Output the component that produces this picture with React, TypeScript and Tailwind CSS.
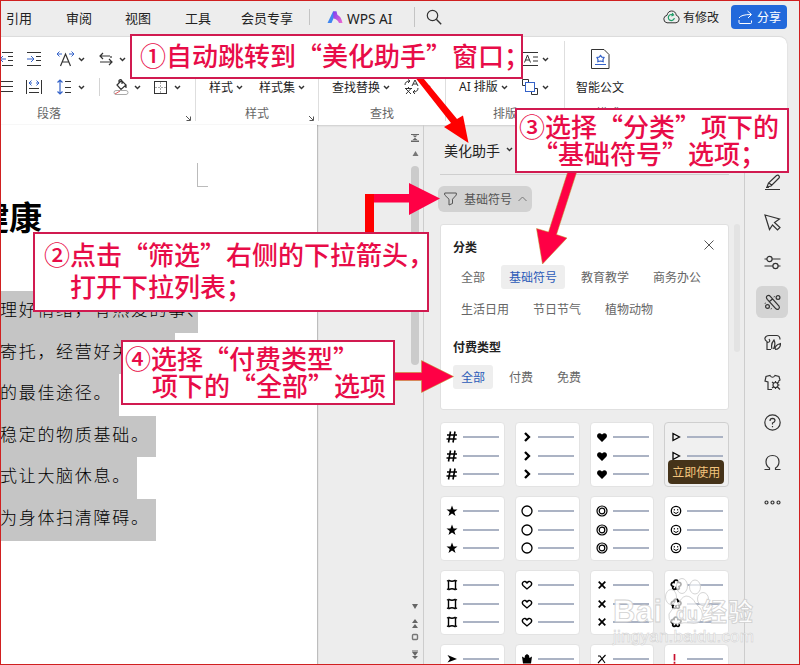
import React from 'react';

type IconProps = {
  className?: string;
  children: React.ReactNode;
  w: number;
  h: number;
  color?: string;
  stroke?: number;
};

const Icon: React.FC<IconProps> = ({ className = '', children, w, h, color = '#333', stroke = 1 }) => (
  <svg
    width={w}
    height={h}
    viewBox={`0 0 ${w} ${h}`}
    fill="none"
    stroke={color}
    strokeWidth={stroke}
    className={`shrink-0 ${className}`}
  >
    {children}
  </svg>
);

const Chevron: React.FC<{ className?: string }> = ({ className = '' }) => (
  <Icon w={7} h={5} className={className}>
    <path d="M1 1L3.5 3.6L6 1" strokeWidth="1.4" />
  </Icon>
);

const Launcher: React.FC<{ className?: string }> = ({ className = '' }) => (
  <Icon w={7} h={7} className={className} color="#555">
    <path d="M1 1L5 5M5.5 1.5V5.5H1.5" />
  </Icon>
);

const Header: React.FC = () => (
  <header className="flex h-[36px] shrink-0 items-center pb-[2px] text-[13px] leading-none text-[#222]">
    <span className="ml-[6px] w-[60px]">引用</span>
    <span className="w-[59px]">审阅</span>
    <span className="w-[60px]">视图</span>
    <span className="w-[56px]">工具</span>
    <span className="w-[68px]">会员专享</span>
    <span className="h-4 w-px bg-[#c4c4c4]" />
    <svg width="16" height="13" viewBox="0 0 16 13" className="ml-[17px] shrink-0">
      <defs>
        <linearGradient id="wps" x1="0" x2="1" y1="0" y2="1">
          <stop offset="0" stopColor="#7b3cf0" />
          <stop offset="1" stopColor="#f06bd0" />
        </linearGradient>
      </defs>
      <path d="M6 .5H9.500L4.500 12H.5Z" fill="#3f86f0" />
      <path d="M6 .5H9.500L10.500 4Q14 5 15.500 12H12Q10.500 8 6.500 7.500Z" fill="url(#wps)" />
    </svg>
    <span className="ml-1 w-[67px] pt-[3px] font-['Noto_Sans'] text-[13.7px]">WPS AI</span>
    <span className="h-5 w-px bg-[#c4c4c4]" />
    <Icon w={16} h={16} className="ml-[11px]">
      <circle cx="6.500" cy="6.500" r="5.200" strokeWidth="1.200" />
      <path d="M10.300 10.300L15.200 15.200" strokeWidth="1.400" />
    </Icon>
    <div className="mr-[13px] ml-auto flex items-center">
      <Icon w={17} h={14} className="mr-[3px]">
        <path d="M4 12.800Q.7 12.300 .8 8.800Q1 6 4 5.300Q5 1 8.700 1Q12.500 1 13.300 5.300Q16 6 16.200 9Q16.100 12.400 13 12.800Z" />
        <path d="M11.300 8A3 3 0 1 1 9.600 4.800M9.200 3L10.500 5L8.400 6" stroke="#1f9d68" strokeWidth="1.200" />
      </Icon>
      <span className="text-xs leading-none">有修改</span>
      <button className="ml-3 flex h-6 w-14 items-center rounded bg-[#2269db] text-xs leading-none text-white">
        <Icon w={15} h={15} className="mr-1 ml-[7px]" color="#fff">
          <path d="M1 10V12.500Q1 13.500 2 13.500H12.500Q13.500 13.500 13.500 12.500V10.500M1 8Q3 4.500 13 4.500M9.500 1L13.500 4.500L10 8" />
        </Icon>
        分享
      </button>
    </div>
  </header>
);

const Ribbon: React.FC = () => (
  <section className="flex h-[89px] w-[787px] shrink-0 rounded-tr-lg border-t border-[#dcdcdc] bg-white text-xs leading-none text-[#222] shadow-[0_1px_2px_#0002]">
    <div className="w-[195px] pt-2">
      <div className="flex h-7 items-center">
        <Icon w={13} h={14}>
          <path d="M2 .5H13M8 4.500H13M8 8.500H13M2 13.500H13" />
          <path d="M0 7H6M3 4L0 7L3 10" stroke="#3563c9" />
        </Icon>
        <Icon w={14} h={14} className="ml-[14px]">
          <path d="M0 .5H14M9 4.500H14M9 8.500H14M0 13.500H14" />
          <path d="M0 7H7M4 4L7 7L4 10" stroke="#3563c9" />
        </Icon>
        <Icon w={17} h={16} className="ml-[16px]">
          <path d="M3.500 15L8.500 3L13.500 15M5 11H12" strokeWidth="1.200" />
          <path d="M0 3H5M2.500 .5L0 3L2.500 5.500M12 3H17M14.500 .5L17 3L14.500 5.500" stroke="#3563c9" />
        </Icon>
        <Chevron className="ml-1" />
        <Icon w={14} h={14} className="ml-[14px]" stroke={1.2}>
          <path d="M11 4H1M4 1L1 4L4 7M1 10H13M12 4V6M10 7L13 10L10 13" />
        </Icon>
        <Chevron className="ml-[6px]" />
      </div>
      <div className="flex h-7 items-center">
        <Icon w={13} h={14}>
          <path d="M0 1.500H13M0 6.500H13M0 11.500H13" />
        </Icon>
        <Icon w={16} h={16} className="ml-[13px]">
          <path d="M.5 1V15M15.500 1V15M3 9.500H13M3 13.500H13" />
          <path d="M3 4H6M10 4H13M5.500 1.500L3 4L5.500 6.500M10.500 1.500L13 4L10.500 6.500" stroke="#3563c9" />
        </Icon>
        <Icon w={15} h={16} className="ml-[15px]">
          <path d="M8 2.500H14M8 8.500H14M8 13.500H14" />
          <path d="M3 1V15M.5 3.500L3 1L5.500 3.500M.5 12.500L3 15L5.500 12.500" stroke="#3563c9" strokeWidth="1.200" />
        </Icon>
        <Chevron className="ml-[6px]" />
        <span className="ml-[14px] h-[18px] w-px bg-[#d4d4d4]" />
        <Icon w={17} h={16} className="ml-[13px]">
          <path d="M4 6L8.500 1.500L13 6L8 10.500ZM6 4V1.500Q8 -.5 9 2V5M13 6V9" strokeWidth="1.200" />
          <rect x="1" y="11.500" width="14" height="4" rx="2" stroke="#aaa" />
          <path d="M2 15L7 12" stroke="#e05a5a" />
        </Icon>
        <Chevron className="ml-1" />
        <Icon w={13} h={13} className="ml-[13px]">
          <rect x=".5" y=".5" width="12" height="12" />
          <path d="M6.500 1V12M1 6.500H12" stroke="#aaa" strokeDasharray="2 1" />
        </Icon>
        <Chevron className="ml-[7px]" />
      </div>
      <div className="flex h-6 items-center pl-[37px] text-[#666]">
        段落
        <Launcher className="mt-[10px] ml-[124px]" />
      </div>
    </div>

    <div className="mt-1 h-[80px] w-[123px] border-l border-[#dedede] pt-[4px]">
      <div className="h-7" />
      <div className="flex h-7 items-center pl-[13px]">
        样式
        <Chevron className="mr-[16px] ml-[3px]" />
        样式集
        <Chevron className="ml-[3px]" />
      </div>
      <div className="flex h-6 items-center pl-[49px] text-[#666]">
        样式
        <Launcher className="mt-[10px] ml-[39px]" />
      </div>
    </div>

    <div className="mt-1 h-[80px] w-[127px] border-l border-[#dedede] pt-[4px]">
      <div className="h-7" />
      <div className="flex h-7 items-center pl-[13px]">
        查找替换
        <Chevron className="mr-[14px] ml-[3px]" />
        <Icon w={15} h={16}>
          <path d="M1 6Q1 2 6 2M4 .5L6 2L4 4M8 7L11 1L14 7M9 5H13M1 9.500H8M4.500 8V9.500M2 15L7 9.500M2 10L7 15M14 9Q14 13 9 13M11 11L9 13L11 15" />
        </Icon>
        <Chevron className="ml-[5px]" />
      </div>
      <div className="flex h-6 items-center pl-[51px] text-[#666]">查找</div>
    </div>

    <div className="mt-1 h-[80px] w-[119px] border-l border-[#dedede] pt-[4px]">
      <div className="flex h-7 items-center pl-[77px]">
        <Icon w={16} h={14}>
          <path d="M0 .5H15M0 13.500H15M10 5H15M10 9H15M1.500 10.500L4.500 3L7.500 10.500M2.500 8H6.500" />
        </Icon>
        <Chevron className="ml-[3px]" />
      </div>
      <div className="flex h-7 items-center pl-[13px]">
        <span className="font-['Noto_Sans','Noto_Sans_CJK_SC',sans-serif]">AI 排版</span>
        <Chevron className="mr-[14px] ml-[3px]" />
        <Icon w={16} h={16}>
          <path d="M3 6.500H.5V.5H6.500V3M9.500 15.500V12.500M13 9.500H15.500V15.500H9.500" />
          <rect x="3.500" y="3.500" width="9" height="9" stroke="#3563c9" />
        </Icon>
        <Chevron className="ml-[4px]" />
      </div>
      <div className="flex h-6 items-center pl-[47px] text-[#666]">排版</div>
    </div>

    <div className="mt-1 h-[80px] w-[223px] border-l border-[#dedede] pt-[4px]">
      <div className="flex h-7 items-center pl-[26px]">
        <Icon w={19} h={20}>
          <path d="M.5 .5H13L18 5.500V19.500H.5Z" />
          <path
            d="M9.500 6.500L10.900 8.200L13 8.500L12 10.500L12.200 12.700L9.500 12L6.800 12.700L7 10.500L6 8.500L8.100 8.200ZM4 15.500H15"
            stroke="#3563c9"
            strokeWidth="1.200"
          />
        </Icon>
      </div>
      <div className="flex h-7 items-center pl-[11px]">智能公文</div>
      <div className="flex h-6 items-center pl-[31px] text-[#666]">模式</div>
    </div>
  </section>
);

const paragraphs = [
  { text: '理好情绪，有热爱的事、', width: 'w-[198px]' },
  { text: '寄托，经营好关', width: 'w-[175px]' },
  { text: '的最佳途径。', width: 'w-[119px]' },
  { text: '稳定的物质基础。', width: 'w-[156px]' },
  { text: '式让大脑休息。', width: 'w-[137px]' },
  { text: '为身体扫清障碍。', width: 'w-[156px]' },
];

const DocumentPage: React.FC = () => (
  <main className="h-full w-[317px] shrink-0 overflow-hidden bg-white pt-[38px] shadow-[1px_0_1px_#0003]">
    <div className="ml-[197px] h-[24px] w-[11px] border-b border-l border-[#bbb]" />
    <h1 className="mt-[4px] -ml-[24px] text-[33px] leading-[50px] font-bold whitespace-nowrap text-black">健康</h1>
    <div className="mt-[50px]">
      {paragraphs.map((p) => (
        <p
          key={p.text}
          className={`${p.width} h-[41.6px] overflow-hidden bg-[#c5c5c5] text-[17px] leading-[36px] font-light tracking-[1.7px] whitespace-nowrap text-black`}
        >
          {p.text}
        </p>
      ))}
    </div>
  </main>
);

const PageScroller: React.FC = () => (
  <div className="ml-auto flex w-[12px] shrink-0 flex-col items-center pr-[4px]">
    <svg width="8" height="8" viewBox="0 0 8 8" fill="#666" className="mt-[9px] shrink-0">
      <path d="M0 0H8V1H0ZM0 6.500H8V8H0ZM1.500 1.500H6.500L4 3.500ZM1.500 6L4 3.800L6.500 6Z" />
    </svg>
    <svg width="7" height="5" viewBox="0 0 7 5" fill="#777" className="mt-[9px] shrink-0">
      <path d="M3.500 0L6.500 5H.5Z" />
    </svg>
    <div className="mt-[10px] h-[199px] w-2 shrink-0 rounded bg-[#cbcbcb]" />
    <svg width="8" height="56" viewBox="0 0 8 56" fill="#666" className="mt-auto mb-[6px] shrink-0">
      <path d="M1 1H7L4 6ZM1 20L4 16L7 20ZM1 25L4 21L7 25ZM1 49H7L4 53ZM1 53H7L4 56ZM1 47.500H7V48.500H1Z" />
      <rect x="1.500" y="31.500" width="5" height="5" rx="1" fill="none" stroke="#777" strokeWidth="1.400" />
    </svg>
  </div>
);

const categories = ['全部', '基础符号', '教育教学', '商务办公', '生活日用', '节日节气', '植物动物'];
const payTypes = ['全部', '付费', '免费'];

const Options: React.FC<{ items: string[]; selected: string }> = ({ items, selected }) => (
  <div className="flex flex-wrap gap-2">
    {items.map((item) => (
      <span
        key={item}
        className={`flex h-6 items-center rounded-[3px] px-2 ${
          item === selected ? 'bg-[#eeeeee] text-[#2c5bb8]' : 'text-[#666]'
        }`}
      >
        {item}
      </span>
    ))}
  </div>
);

// Each mark is drawn in a 14x14 box.
const marks: { key: string; node: React.ReactNode }[] = [
  { key: 'hash', node: <path d="M5.500 1.500L3.500 12.500M10 1.500L8 12.500M2 5H12M1.500 9H11.500" strokeWidth="1.600" /> },
  { key: 'angle', node: <path d="M5 3L9 7L5 11" strokeWidth="2.300" /> },
  {
    key: 'heart',
    node: <path d="M7 12L2.500 7.500Q1.500 6 2.500 4.200Q4.500 2 7 4.500Q9.500 2 11.500 4.200Q12.500 6 11.500 7.500Z" fill="#000" stroke="none" />,
  },
  { key: 'triangle', node: <path d="M4 3.500V10.500L10.500 7Z" strokeWidth="1.300" /> },
  {
    key: 'star',
    node: <path d="M7 1.500L8.500 5.400H12.500L9.300 7.900L10.500 12L7 9.600L3.500 12L4.700 7.900L1.500 5.400H5.500Z" fill="#000" stroke="none" />,
  },
  { key: 'circle', node: <circle cx="7" cy="7" r="5" strokeWidth="1.300" /> },
  {
    key: 'ring',
    node: (
      <>
        <circle cx="7" cy="7" r="5" strokeWidth="1.200" />
        <circle cx="7" cy="7" r="2.800" strokeWidth="1.200" />
      </>
    ),
  },
  {
    key: 'smile',
    node: (
      <>
        <circle cx="7" cy="7" r="4.700" strokeWidth="1.300" />
        <path d="M4.500 8Q7 11 9.500 8M5.300 5V6.500M8.700 5V6.500" />
      </>
    ),
  },
  {
    key: 'frame',
    node: (
      <path
        d="M2 2.500Q3.500 3.500 4 2.500Q7 4 10 2.500Q10.500 3.500 12 2.500M2 11.500Q3.500 10.500 4 11.500Q7 10 10 11.500Q10.500 10.500 12 11.500M3.500 3.500V10.500M10.500 3.500V10.500"
        strokeWidth="1.400"
      />
    ),
  },
  {
    key: 'heart-outline',
    node: <path d="M7 11L3 7.500Q1.500 5.500 3.200 4Q5.200 2.500 7 5Q8.800 2.500 10.800 4Q12.500 5.500 11 7.500Z" strokeWidth="1.300" />,
  },
  { key: 'cross', node: <path d="M3.700 3.700L10.300 10.300M10.300 3.700L3.700 10.300" strokeWidth="1.700" /> },
  {
    key: 'flower',
    node: (
      <path
        d="M5 4.500Q5 2 7 2Q9 2 9 4.500Q12 4 12 6.500Q12 8 10 8.500Q11 11 9 11.500Q7.500 11.500 7 10Q6 12 4.500 11.300Q3 10.500 4.200 8.500Q2 8 2.300 6Q3 4 5 4.500Z"
        strokeWidth="1.700"
      />
    ),
  },
  { key: 'dart', node: <path d="M2.500 3L12 7L2.500 10.500L5 7Z" fill="#000" stroke="none" /> },
  {
    key: 'crown',
    node: <path d="M2 4.500L4.500 6L5 3.500L7 2L9 3.500L9.500 6L12 4.500L11 11.500H3Z" fill="#000" stroke="none" />,
  },
  { key: 'ex', node: <path d="M3 4L5 4L10 11M10.500 3L3 11" strokeWidth="1.100" /> },
  { key: 'bang', node: <path d="M5.500 2V8.500M5.500 9.800V11.700" stroke="#c8102e" strokeWidth="1.700" /> },
];

const SymbolCard: React.FC<{ index: number }> = ({ index }) => {
  const hovered = index === 3;
  return (
    <div
      className={`relative h-[65px] rounded border pt-[4px] pl-[4px] ${
        hovered ? 'border-[#cfcfcf] bg-[#f0f0f0]' : 'border-[#e3e3e3] bg-white'
      }`}
    >
      {[0, 1, 2].map((row) => (
        <div key={row} className={`flex items-center ${row === 2 ? 'h-[18px]' : 'h-[19px]'}`}>
          <Icon w={14} h={14} color="#000">
            {marks[index].node}
          </Icon>
          <span className="ml-[4px] h-[2px] w-[36px] bg-[#abb3c4]" />
        </div>
      ))}
      {hovered && (
        <span className="absolute top-[37px] left-[3px] flex h-6 w-14 items-center justify-center rounded bg-[#453319] text-xs leading-none text-[#f3c47d]">
          立即使用
        </span>
      )}
    </div>
  );
};

const BeautifyPane: React.FC = () => (
  <aside className="flex w-[322px] shrink-0 flex-col border-x border-[#cdcdcd] pl-4 text-xs leading-none text-[#222]">
    <div className="flex h-[50px] w-[289px] items-center border-b border-[#cfcfcf] pl-1 text-sm leading-none">
      美化助手
      <Chevron className="ml-[6px]" />
    </div>
    <div className="mt-[11px] -ml-[2px] flex h-[26px] w-[94px] items-center rounded-md bg-[#d2d2d2] pl-[6px] text-[#555]">
      <Icon w={13} h={14} color="#555">
        <path d="M.7 1H12.300V3L8.500 7.200V11.500L5 13V7.200L.7 3Z" />
      </Icon>
      <span className="ml-[7px]">基础符号</span>
      <Icon w={9} h={6} className="ml-[6px]" color="#777">
        <path d="M.5 5L4.500 1L8.500 5" />
      </Icon>
    </div>
    <div className="mt-[12px] flex">
      <div className="h-[186px] w-[289px] rounded-[3px] border border-[#e0e0e0] bg-white pl-[12px]">
        <div className="flex h-[40px] items-center justify-between pt-[4px] pr-[14px] font-bold">
          分类
          <Icon w={10} h={10} className="mb-[4px]" color="#555">
            <path d="M.5 .5L9.500 9.500M9.500 .5L.5 9.500" />
          </Icon>
        </div>
        <Options items={categories} selected="基础符号" />
        <h4 className="mt-[20px] mb-[12px] font-bold">付费类型</h4>
        <Options items={payTypes} selected="全部" />
      </div>
      <div className="ml-[5px] h-[128px] w-[6px] rounded bg-[#e3e3e3]" />
    </div>
    <div className="mt-3 grid h-[242px] w-[289px] grid-cols-4 content-start gap-x-[10px] gap-y-[9px] overflow-hidden">
      {marks.map((m, i) => (
        <SymbolCard key={m.key} index={i} />
      ))}
    </div>
  </aside>
);

const tools: { key: string; node: React.ReactNode }[] = [
  { key: 'pen', node: <path d="M1 15.500H16M3 13L4.500 9L12.500 1.500Q14 .5 15 2Q16 3 15 4L7 12ZM5 9L8 11.500M2 13.500H5" /> },
  { key: 'pointer', node: <path d="M1 1L15.500 5L10.500 8.500L16 13.500L13.500 16L8.500 11L5.500 15.500Z" /> },
  {
    key: 'sliders',
    node: (
      <>
        <circle cx="5.500" cy="5" r="2.600" />
        <circle cx="11.500" cy="12" r="2.600" />
        <path d="M.5 5H3M8 5H16.500M.5 12H9M14 12H16.500" />
      </>
    ),
  },
  {
    key: 'wand',
    node: (
      <>
        <path d="M3.300 5.300Q1.500 3 3.300 1.800Q5 .8 6.300 2.300L15 12Q16 13.700 14.700 14.900Q13 16 11.500 14.300ZM5.500 7.500L8.500 5" />
        <circle cx="3.500" cy="12.500" r="1.900" />
        <circle cx="14" cy="3.500" r="1.900" />
        <path d="M10 2.500L10.500 3M7 14.500L7.500 15M1 9L1.500 9.500" strokeWidth="1.500" />
      </>
    ),
  },
  {
    key: 'stamp',
    node: <path d="M1 4Q2 1.500 5 1.500H13Q16 2 16 5.500M1 4Q.5 6 3 7.500V15.500H7M5 5Q7 8 3.500 8.500M8 15Q6.500 10 10 6Q12 10 9.500 15M11 15Q11 11 16.500 9.500Q16.500 15 11 15.500" />,
  },
  {
    key: 'shirt',
    node: (
      <>
        <path d="M8 15.500H4V8L1 7L2 2.500L6 1.500Q8.500 5 11 1.500L15 2.500L16 6L14.500 7" />
        <circle cx="11.500" cy="11" r="2.500" />
        <path d="M8 8L10 9.500M15 7.500L13 9.500M8 14L10 12.500M13 12.500L16 15.500M11.500 7V8.500M14 11H15.500M11.500 14V15" />
      </>
    ),
  },
  {
    key: 'help',
    node: (
      <>
        <circle cx="8.500" cy="8.500" r="7.700" />
        <path d="M6 7Q6 4.300 8.500 4.300Q11 4.500 11 6.500Q11 8 8.500 9V10.500M8.500 12V13.200" />
      </>
    ),
  },
  { key: 'omega', node: <path d="M.5 15.500H5.500V14Q2 12 2 7.500Q2.500 1.500 8.500 1.500Q14.500 1.500 15 7.500Q15 12 11.500 14V15.500H16.500" /> },
  {
    key: 'more',
    node: (
      <>
        <circle cx="2.500" cy="8.500" r="1.500" />
        <circle cx="8.500" cy="8.500" r="1.500" />
        <circle cx="14.500" cy="8.500" r="1.500" />
      </>
    ),
  },
];

const ToolRail: React.FC = () => (
  <nav className="flex w-[55px] shrink-0 flex-col items-center gap-2 pt-[41px] pr-px">
    {tools.map((tool) => (
      <span
        key={tool.key}
        className={`flex h-8 w-8 items-center justify-center rounded-md ${tool.key === 'wand' ? 'bg-[#d4d4d4]' : ''}`}
      >
        <Icon w={17} h={17} stroke={1.2}>
          {tool.node}
        </Icon>
      </span>
    ))}
  </nav>
);

const Watermark: React.FC = () => (
  <svg width="160" height="70" viewBox="0 0 160 70" className="absolute top-[578px] left-[604px] opacity-90">
    <g fill="#fff" fillOpacity=".75" stroke="#d2d2d2">
      <ellipse cx="67" cy="19" rx="5.500" ry="7.500" />
      <ellipse cx="78" cy="8" rx="5.500" ry="7.500" />
      <ellipse cx="91" cy="9" rx="5.500" ry="7" />
      <ellipse cx="99" cy="21" rx="5.500" ry="6.500" />
      <path d="M82 18Q88 18 92 26Q100 32 98 40Q95 47 86 45Q80 44 74 46Q64 46 65 36Q67 31 74 27Q77 19 82 18Z" />
    </g>
    <g fill="#fff" stroke="#cdcdcd" strokeWidth=".8" fontWeight="bold">
      <text x="9" y="44" fontSize="31" textLength="49" fontFamily="Liberation Sans, sans-serif">
        Bai
      </text>
      <text x="72" y="42" fontSize="18" fontFamily="Liberation Sans, sans-serif">
        du
      </text>
      <text x="98" y="43" fontSize="25" textLength="51" fontFamily="Noto Sans CJK SC, sans-serif">
        经验
      </text>
    </g>
    <text
      x="9"
      y="64"
      fontSize="17"
      textLength="141"
      fill="#fff"
      stroke="#cacaca"
      strokeWidth=".5"
      fontFamily="Liberation Sans, sans-serif"
    >
      jingyan.baidu.com
    </text>
  </svg>
);

const noteClass =
  'absolute border-2 border-[#d11a50] bg-white text-[26px] font-medium whitespace-pre text-[#e80c48]';

const Annotations: React.FC = () => (
  <>
    <svg width="800" height="665" viewBox="0 0 800 665" className="absolute inset-0">
      <path d="M414 76L419 73L457 119L463 115.500L468.500 143L444 127L451 123Z" fill="#ff0000" />
      <path d="M365 194H374V233H365Z" fill="#ff0000" />
      <path d="M374 194H409V183L440 198.500L409 215V202.500H374Z" fill="#ff0045" />
      <path
        d="M568 171H577L556.500 234.500L567 238L542.500 264L536.500 228.500L548.500 232Z"
        fill="#ff0045"
        stroke="#b99a20"
        strokeWidth=".5"
      />
      <path
        d="M394 372.500H421.500V360.500L453.500 376.500L421.500 392.500V380.500H394Z"
        fill="#ff0045"
        stroke="#b99a20"
        strokeWidth=".5"
      />
    </svg>
    <div className={`${noteClass} top-[34px] left-[130px] h-[45px] w-[393px] pl-[8px] leading-[37px]`}>
      ①自动跳转到“美化助手”窗口；
    </div>
    <div className={`${noteClass} top-[232px] left-[33px] h-[80px] w-[396px] pt-[4px] pl-[9px] leading-[32px]`}>
      <p>②点击“筛选”右侧的下拉箭头，</p>
      <p className="pl-[26px]">打开下拉列表；</p>
    </div>
    <div className={`${noteClass} top-[108px] left-[515px] h-[65px] w-[274px] pt-[2px] pl-[2px] leading-[27px]`}>
      <p>③选择“分类”项下的</p>
      <p className="pl-[13px]">“基础符号”选项；</p>
    </div>
    <div className={`${noteClass} top-[340px] left-[121px] h-[65px] w-[274px] pt-[2px] pl-[2px] leading-[27px]`}>
      <p>④选择“付费类型”</p>
      <p className="pl-[27px]">项下的“全部”选项</p>
    </div>
  </>
);

const App: React.FC = () => (
  <div
    lang="zh-CN"
    className="relative flex h-[665px] w-[800px] flex-col overflow-hidden bg-[#ededed] font-['Noto_Sans_CJK_SC',sans-serif]"
  >
    <Header />
    <Ribbon />
    <div className="flex min-h-0 flex-1">
      <DocumentPage />
      <PageScroller />
      <BeautifyPane />
      <ToolRail />
    </div>
    <Watermark />
    <Annotations />
    <div className="pointer-events-none absolute inset-0 border border-[#d02020]" />
  </div>
);

export default App;
